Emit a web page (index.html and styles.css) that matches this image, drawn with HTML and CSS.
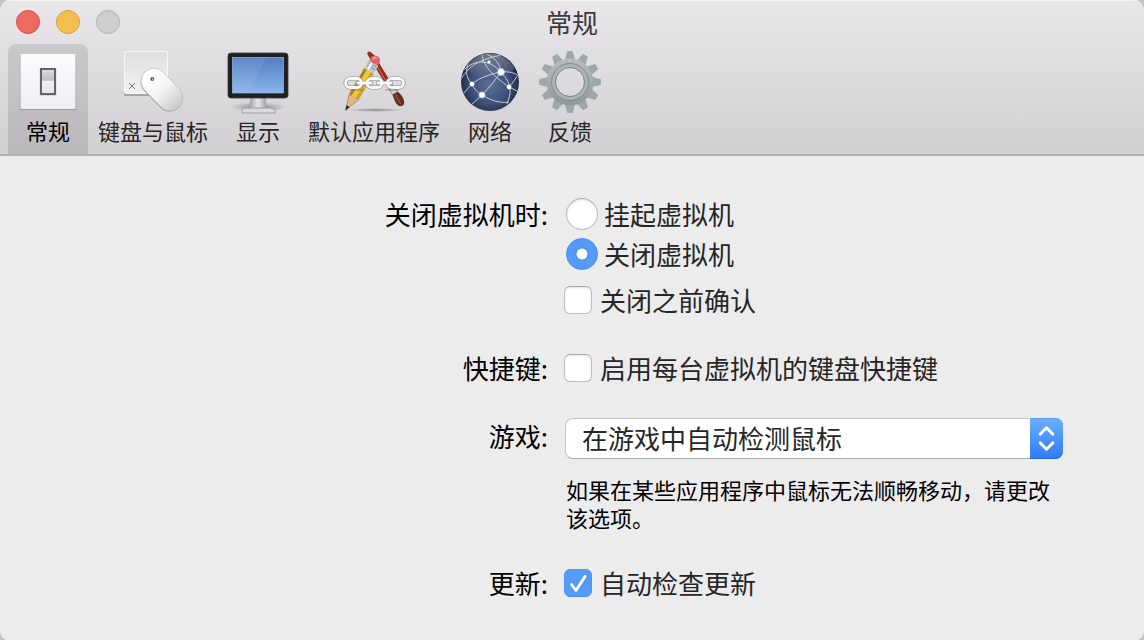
FILE: index.html
```
<!DOCTYPE html>
<html lang="zh-CN">
<head>
    <meta charset="UTF-8">
    <meta name="viewport" content="width=device-width, initial-scale=1.0">
    <title>常规</title>
    <link rel="stylesheet" href="styles.css">
</head>
<body>
    <div class="window">
        <header class="header">
            <div class="titlebar">
                <div class="window-buttons">
                    <button class="dot close" aria-label="关闭"></button>
                    <button class="dot minimize" aria-label="最小化"></button>
                    <button class="dot zoom" aria-label="缩放" disabled></button>
                </div>
                <h1>常规</h1>
            </div>
            <nav class="toolbar">
                <button class="tab active">
                    <svg viewBox="0 0 64 64">
                        <defs>
                            <linearGradient id="plate" x1="0" y1="0" x2="0" y2="1"><stop offset="0" stop-color="#fbfcfd"/><stop offset="1" stop-color="#eceef3"/></linearGradient>
                            <linearGradient id="switch" x1="0" y1="0" x2="0" y2="1"><stop offset="0" stop-color="#e8e8ea"/><stop offset=".12" stop-color="#d4d4d8"/><stop offset=".45" stop-color="#bfc0c5"/><stop offset=".5" stop-color="#f1f1f4"/><stop offset="1" stop-color="#e4e5ea"/></linearGradient>
                        </defs>
                        <rect x="4" y="5" width="56" height="55" rx="1" fill="#9b9a9d"/>
                        <rect x="4.5" y="4" width="55" height="55" rx="1" fill="url(#plate)"/>
                        <rect x="23.500" y="18" width="17" height="28" rx="1" fill="#d5d6db"/>
                        <rect x="25" y="19" width="14" height="25" fill="url(#switch)" stroke="#48484c" stroke-width="1.6"/>
                    </svg>
                    <span>常规</span>
                </button>
                <button class="tab">
                    <svg viewBox="0 0 64 64">
                        <defs>
                            <linearGradient id="key" x1="0" y1="0" x2="0" y2="1"><stop offset="0" stop-color="#dfdfe1"/><stop offset="1" stop-color="#f2f2f3"/></linearGradient>
                            <linearGradient id="mouse" x1="0" y1="0" x2="0" y2="1"><stop offset="0" stop-color="#fff"/><stop offset=".5" stop-color="#f5f5f5"/><stop offset="1" stop-color="#c9c9cb"/></linearGradient>
                        </defs>
                        <rect x="3" y="2" width="44" height="44" rx="1.5" fill="#a5a4a7"/>
                        <rect x="3.5" y="1.5" width="43" height="42" rx="1.5" fill="url(#key)" stroke="#f8f8f8"/>
                        <path d="M8 33l6 6m0-6l-6 6" stroke="#77767a" stroke-width="1" fill="none"/>
                        <rect x="28" y="15.500" width="26" height="49" rx="13" fill="#98979b" transform="rotate(-44 41 40.500)"/>
                        <rect x="28" y="15" width="26" height="49" rx="13" fill="url(#mouse)" stroke="#bcbcbe" stroke-width=".7" transform="rotate(-44 41 39.5)"/>
                        <circle cx="31.300" cy="29" r="2" fill="#5c5c60"/>
                        <circle cx="31.700" cy="29.400" r=".8" fill="#ccc"/>
                    </svg>
                    <span>键盘与鼠标</span>
                </button>
                <button class="tab">
                    <svg viewBox="0 0 64 64">
                        <defs>
                            <linearGradient id="screen" x1="0" y1="0" x2="0" y2="1"><stop offset="0" stop-color="#527fc4"/><stop offset="1" stop-color="#8bb4ec"/></linearGradient>
                            <linearGradient id="neck" x1="0" y1="0" x2="1" y2="0"><stop offset="0" stop-color="#8c8c8f"/><stop offset=".5" stop-color="#e8e8ea"/><stop offset="1" stop-color="#8c8c8f"/></linearGradient>
                            <radialGradient id="shade"><stop offset="0" stop-color="#000" stop-opacity=".35"/><stop offset="1" stop-color="#000" stop-opacity="0"/></radialGradient>
                        </defs>
                        <ellipse cx="32" cy="57" rx="28" ry="5" fill="url(#shade)"/>
                        <path d="M24 48h16c0 6 1 9 3 11H21c2-2 3-5 3-11z" fill="url(#neck)"/>
                        <path d="M19 58h26l4 1.500v3.500H16v-3.500z" fill="#d9d9db" stroke="#929295" stroke-width=".8"/>
                        <rect x="2" y="3" width="60" height="45" rx="3" fill="#1d1f22" stroke="#3b3d40" stroke-width=".8"/>
                        <rect x="6.500" y="7.500" width="51" height="35.500" fill="url(#screen)" stroke="#9dbce8" stroke-width=".7"/>
                        <path d="M7 8h33L22 42H7z" fill="#fff" opacity=".07"/>
                    </svg>
                    <span>显示</span>
                </button>
                <button class="tab">
                    <svg viewBox="0 0 64 64">
                        <ellipse cx="33" cy="60" rx="28" ry="2" fill="url(#shade)"/>
                        <!-- brush -->
                        <g transform="translate(27 3) rotate(-30)">
                            <path d="M-2 0c1-2 3-2 4 0l1.500 5 1 40h-5L-2 12z" fill="#8d2f1c"/>
                            <path d="M0 4L1 40" stroke="#d76a4c" stroke-width="1"/>
                            <path d="M-.5 36h5L5.500 48h-6z" fill="#cfcfd2" stroke="#77777a" stroke-width=".6"/>
                            <path d="M-.5 48h6c2 5 2 10 0 13-2 2-4 2-6 0-2-4-1-8 0-13z" fill="#63301f"/>
                            <path d="M2 49v11" stroke="#9b553b" stroke-width="1.300"/>
                        </g>
                        <!-- pencil -->
                        <g transform="translate(3.500 60.500) rotate(30)">
                            <path d="M0 0l-5-16h11z" fill="#dfb784" stroke="#8a6334" stroke-width=".5"/>
                            <path d="M0 0l-1.600-5h3.400z" fill="#262220"/>
                            <path d="M-5-15v-31H6v31l-3-2-3 2-2-2z" fill="#efc83e"/>
                            <path d="M-5-15v-31h3v29z" fill="#a78424"/>
                            <path d="M2.500-17v-29H6v31z" fill="#d0a32a"/>
                            <path d="M-5-46h11v-9H-5z" fill="#c6c7ca"/>
                            <path d="M-4-50h9M-4-53h9" stroke="#85868a" stroke-width=".8"/>
                            <path d="M-1-54v7" stroke="#fff" stroke-width="2"/>
                            <path d="M-4.500-55v-4q1-4 5-4t5 4v4z" fill="#e0636b"/>
                            <path d="M-2-58q0-3 3-3" stroke="#f5a4a7" stroke-width="1.500" fill="none"/>
                        </g>
                        <!-- chain -->
                        <path d="M8 40h13M43 40h14" stroke="#4b3b25" stroke-width="1.500" opacity=".3"/>
                        <g fill="none" stroke="#8b8b8e" stroke-width="4">
                            <rect x="3.500" y="28.500" width="16" height="9" rx="4.500"/>
                            <rect x="25" y="28.500" width="15" height="9" rx="4.500"/>
                            <rect x="45.500" y="28.500" width="16" height="9" rx="4.500"/>
                            <path d="M16 33h13M36 33h13" stroke-linecap="round"/>
                        </g>
                        <g fill="none" stroke="#f8f8f8" stroke-width="2.800">
                            <rect x="3.500" y="28.500" width="16" height="9" rx="4.500"/>
                            <rect x="25" y="28.500" width="15" height="9" rx="4.500"/>
                            <rect x="45.500" y="28.500" width="16" height="9" rx="4.500"/>
                            <path d="M16 33h13M36 33h13" stroke-linecap="round"/>
                        </g>
                    </svg>
                    <span>默认应用程序</span>
                </button>
                <button class="tab">
                    <svg viewBox="0 0 64 64">
                        <defs>
                            <radialGradient id="globe" cx=".5" cy=".55" r=".55"><stop offset="0" stop-color="#5d7199"/><stop offset=".6" stop-color="#3f5079"/><stop offset=".9" stop-color="#25304e"/><stop offset="1" stop-color="#171e33"/></radialGradient>
                            <linearGradient id="gloss" x1="0" y1="0" x2="0" y2="1"><stop offset="0" stop-color="#fff" stop-opacity=".4"/><stop offset="1" stop-color="#fff" stop-opacity="0"/></linearGradient>
                            <radialGradient id="glow"><stop offset=".55" stop-color="#fff"/><stop offset="1" stop-color="#fff" stop-opacity="0"/></radialGradient>
                            <clipPath id="ball"><circle cx="32" cy="32" r="28.500"/></clipPath>
                        </defs>
                        <circle cx="32" cy="32" r="29" fill="url(#globe)"/>
                        <g clip-path="url(#ball)">
                            <ellipse cx="32" cy="15" rx="25" ry="13" fill="url(#gloss)"/>
                            <g fill="none" stroke="#dce3f0" stroke-width="1" opacity=".85">
                                <path d="M6 20C17 9 31 9 43 22s10 21 6 32"/>
                                <path d="M2 31C10 16 22 9 44 5"/>
                                <path d="M24 4c1 13 13 23 27 33l10 5"/>
                                <path d="M43 22c8-1 13 1 18 4"/>
                                <path d="M43 22C28 25 20 29 14 34L4 45"/>
                                <path d="M43 22C37 30 31 38 24 45L12 56"/>
                                <path d="M14 34c2 5 5 8 10 11s16 9 27 7"/>
                                <path d="M10 13C7 23 9 29 14 34"/>
                                <path d="M51 37c4-4 6-8 9-12"/>
                                <path d="M43 22c-1-8-5-13-14-18"/>
                            </g>
                        </g>
                        <g fill="url(#glow)">
                            <circle cx="43" cy="22" r="4.500"/>
                            <circle cx="24" cy="45" r="4"/>
                            <circle cx="14" cy="34" r="3"/>
                            <circle cx="51" cy="37" r="3"/>
                            <circle cx="31" cy="12" r="2"/>
                        </g>
                    </svg>
                    <span>网络</span>
                </button>
                <button class="tab">
                    <svg viewBox="0 0 64 64">
                        <defs>
                            <linearGradient id="steel" gradientUnits="userSpaceOnUse" x1="0" y1="0" x2="0" y2="64"><stop offset="0" stop-color="#bcc5c7"/><stop offset=".5" stop-color="#a5abac"/><stop offset="1" stop-color="#8b8e8e"/></linearGradient>
                            <g id="teeth">
                                <path d="M27 12l2.500-10.500h5L37 12z"/>
                                <path d="M27 52l2.500 10.500h5L37 52z"/>
                            </g>
                        </defs>
                        <g fill="#a0a7a8" stroke="#8a9293" stroke-width=".5">
                            <use href="#teeth"/>
                            <use href="#teeth" transform="rotate(30 32 32)"/>
                            <use href="#teeth" transform="rotate(60 32 32)"/>
                            <use href="#teeth" transform="rotate(90 32 32)"/>
                            <use href="#teeth" transform="rotate(120 32 32)"/>
                            <use href="#teeth" transform="rotate(150 32 32)"/>
                        </g>
                        <circle cx="32" cy="32" r="19" fill="none" stroke="url(#steel)" stroke-width="9"/>
                        <circle cx="32" cy="32" r="16.500" fill="none" stroke="#aab3b5" stroke-width="3.500"/>
                        <circle cx="32" cy="32" r="18.500" fill="none" stroke="#838b8c" stroke-width="1"/>
                        <circle cx="32" cy="32" r="14.500" fill="none" stroke="#7c8485" stroke-width="1"/>
                    </svg>
                    <span>反馈</span>
                </button>
            </nav>
        </header>

        <form class="settings">
            <div class="label" id="closeLabel">关闭虚拟机时:</div>
            <div class="controls" role="group" aria-labelledby="closeLabel">
                <label class="option radio"><input type="radio" name="onclose">挂起虚拟机</label>
                <label class="option radio"><input type="radio" name="onclose" checked>关闭虚拟机</label>
                <label class="option confirm"><input type="checkbox">关闭之前确认</label>
            </div>

            <div class="label">快捷键:</div>
            <div class="controls">
                <label class="option"><input type="checkbox">启用每台虚拟机的键盘快捷键</label>
            </div>

            <label class="label" for="gaming">游戏:</label>
            <div class="controls">
                <div class="select">
                    <select id="gaming">
                        <option>在游戏中自动检测鼠标</option>
                    </select>
                    <span class="arrows">
                        <svg viewBox="0 0 34 40"><path d="M10.500 15.500L17 9l6.500 6.500M10.500 24.500L17 31l6.500-6.500"/></svg>
                    </span>
                </div>
                <p class="hint">如果在某些应用程序中鼠标无法顺畅移动，请更改该选项。</p>
            </div>

            <div class="label">更新:</div>
            <div class="controls">
                <label class="option"><input type="checkbox" checked>自动检查更新</label>
            </div>
        </form>
    </div>
</body>
</html>
```
FILE: styles.css
```
* {
    box-sizing: border-box;
}
body {
    margin: 0;
    background-color: #c4c4c4;
    font-family: "Noto Sans CJK SC", sans-serif;
    font-size: 26px;
    color: #262626;
}
button, select {
    font-family: inherit;
    color: inherit;
}
.window {
    min-height: 100vh;
    background-color: #ececec;
    border-radius: 10px;
    overflow: hidden;
}
.header {
    background: linear-gradient(#e9e7e9, #d1cfd1);
    border-bottom: 2px solid #b3b1b3;
    box-shadow: inset 0 1px 0 #f4f3f4;
}
.titlebar {
    display: grid;
    grid-template-columns: 1fr auto 1fr;
    align-items: center;
    height: 44px;
    padding: 0 16px;
}
.window-buttons {
    display: flex;
    gap: 16px;
}
.dot {
    width: 24px;
    height: 24px;
    padding: 0;
    border: 1px solid;
    border-radius: 50%;
}
.close {
    background-color: #ee6a5f;
    border-color: #d35047;
}
.minimize {
    background-color: #f5bf4f;
    border-color: #d8a03c;
}
.zoom {
    background-color: #cfcecf;
    border-color: #b4b3b4;
}
h1 {
    margin: 0;
    font-size: 26px;
    font-weight: 400;
    line-height: 44px;
    color: #3c3a3c;
}
.toolbar {
    display: flex;
    padding: 0 8px;
}
.tab {
    display: flex;
    flex-direction: column;
    align-items: center;
    gap: 2px;
    min-width: 80px;
    height: 110px;
    padding: 6px 10px 0;
    border: none;
    border-radius: 8px 8px 0 0;
    background: none;
    font-size: 22px;
    line-height: 28px;
    white-space: nowrap;
}
.tab svg {
    width: 64px;
    height: 64px;
    margin: 0 -2px;
    flex-shrink: 0;
}
.tab.active {
    background: linear-gradient(#cac8ca, #bab8ba);
    color: #000;
}
.settings {
    display: grid;
    grid-template-columns: 1fr minmax(0, 500px);
    gap: 28px 16px;
    padding: 38px 80px 38px 0;
}
.label {
    color: #000;
    line-height: 40px;
    text-align: right;
}
.option {
    display: flex;
    align-items: center;
    gap: 8px;
    line-height: 40px;
}
.option.radio {
    gap: 6px;
    padding-left: 2px;
}
.confirm {
    margin-top: 6px;
}
input {
    appearance: none;
    flex-shrink: 0;
    width: 28px;
    height: 28px;
    margin: 0;
    border: 1px solid #bdbdbd;
    border-top-color: #a9a9a9;
    border-radius: 6px;
    background-color: #fff;
    box-shadow: inset 0 1px 2px rgba(0, 0, 0, 0.12);
}
input[type="radio"] {
    width: 32px;
    height: 32px;
    border-radius: 50%;
}
input:checked {
    border-color: #5093f3;
    background-color: #559af7;
    box-shadow: none;
}
input[type="radio"]:checked {
    background-image: radial-gradient(circle, #fff 5px, #4585df 6px, #559af7 7px);
}
input[type="checkbox"]:checked {
    background-image: url('data:image/svg+xml,<svg xmlns="http://www.w3.org/2000/svg" viewBox="0 0 26 26"><path d="M6.500 14.500L11 20.500L20 6.500" fill="none" stroke="white" stroke-width="2.800" stroke-linecap="round" stroke-linejoin="round"/></svg>');
}
.select {
    position: relative;
    margin: 2px 1px 0;
}
select {
    appearance: none;
    display: block;
    width: 100%;
    height: 41px;
    padding: 0 48px 2px 16px;
    border: 1px solid #c6c6c6;
    border-bottom-color: #acacac;
    border-radius: 8px;
    background-color: #fff;
    font-size: 26px;
}
.arrows {
    position: absolute;
    top: 0;
    right: 0;
    bottom: 0;
    width: 33px;
    border-radius: 0 8px 8px 0;
    background: linear-gradient(#6cb0f8, #2d7af6);
    box-shadow: inset 0 -1px 0 #2468d8, inset 0 1px 0 #5d9fe8;
    pointer-events: none;
}
.arrows svg {
    display: block;
    width: 100%;
    height: 100%;
    fill: none;
    stroke: #fff;
    stroke-width: 3;
    stroke-linecap: round;
    stroke-linejoin: round;
}
.hint {
    margin: 16px 2px 4px;
    font-size: 22px;
    line-height: 28px;
    color: #000;
}
```
